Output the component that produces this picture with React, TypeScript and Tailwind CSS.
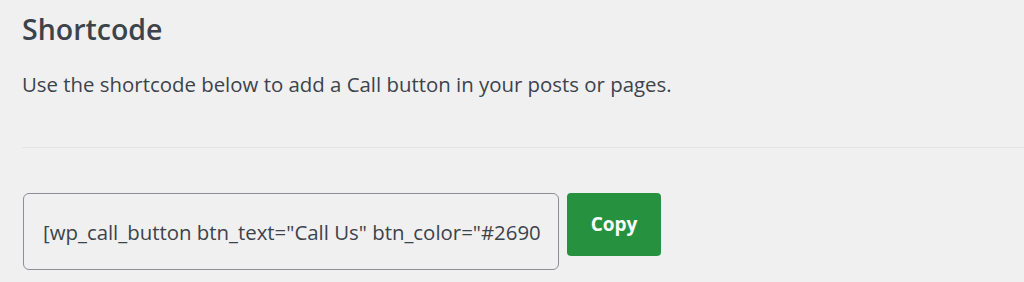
export default function App() {
  const shortcode =
    '[wp_call_button btn_text="Call Us" btn_color="#269041" btn_center_align="false" hide_phone_icon="false"]';

  return (
    <div
      className="h-[282px] w-full overflow-hidden bg-[#f0f0f1] pl-[22px] text-[#3c434a]"
      style={{ fontFamily: '"Open Sans", "Noto Sans", sans-serif' }}
    >
      <h2 className="pt-[11px] text-[28.5px] font-semibold leading-[36px]">Shortcode</h2>
      <p className="mt-[23px] text-[20.4px] leading-[28px]">
        Use the shortcode below to add a Call button in your posts or pages.
      </p>
      <div className="mt-[49px] border-t border-[#e4e4e6]" />
      <div className="mt-[45px] flex items-start gap-[8px] pl-[1px]">
        <input
          readOnly
          value={shortcode}
          className="h-[77px] w-[536px] rounded-[6px] border border-[#8c8f94] bg-[#f0f0f1] pl-[19px] pr-[18px] text-[20.4px] text-[#3c434a] outline-none"
        />
        <button className="h-[63px] w-[94px] rounded-[4px] bg-[#26913f] text-[19px] font-bold text-white">
          Copy
        </button>
      </div>
    </div>
  );
}
